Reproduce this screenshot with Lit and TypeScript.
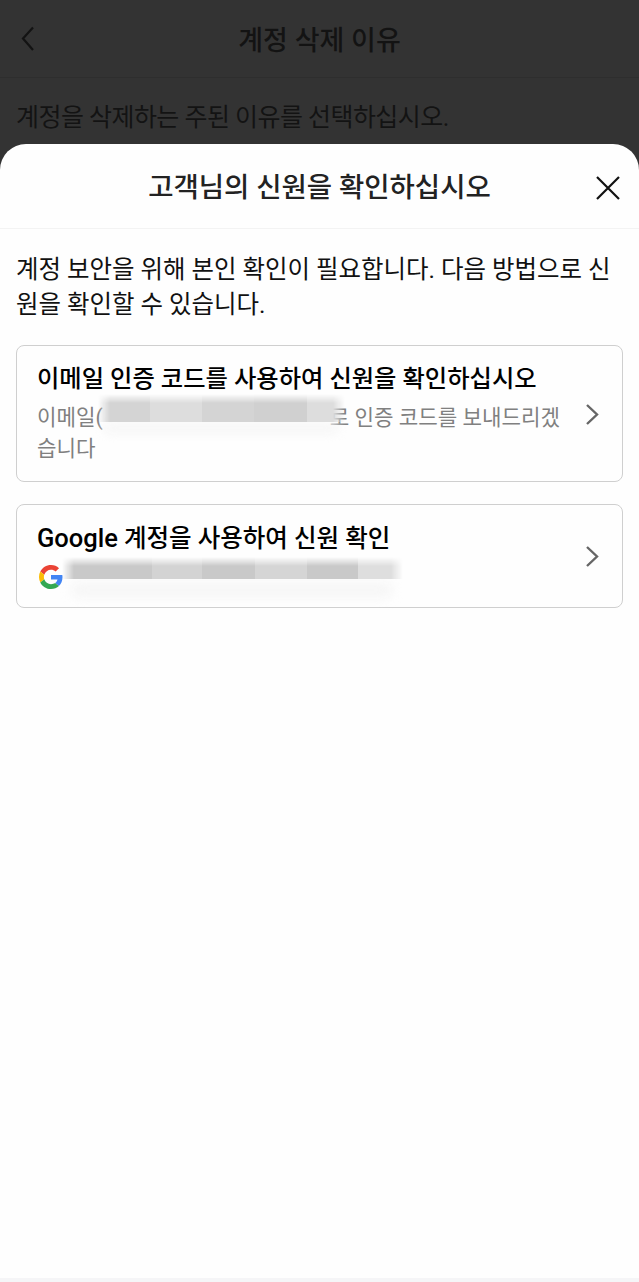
import { LitElement, html, css, svg } from "lit";
import { customElement } from "lit/decorators.js";

const chevron = svg`<path d="M3 2 L13 11.5 L3 21" fill="none" stroke="#666" stroke-width="2.4"/>`;

@customElement("app-root")
export class AppRoot extends LitElement {
  static styles = css`
    :host {
      display: block;
      position: relative;
      width: 639px;
      height: 1282px;
      overflow: hidden;
      background: #333;
      font-family: Roboto, "Noto Sans CJK KR", sans-serif;
      color: #000;
    }
    .under { color: #131313; }
    .top {
      height: 78px;
      display: flex;
      align-items: center;
      justify-content: center;
      position: relative;
      border-bottom: 1px solid #2e2e2e;
      box-sizing: border-box;
      font-size: 27px;
      font-weight: 500;
    }
    .back { position: absolute; left: 19px; top: 26px; }
    .prompt {
      margin: 0;
      padding: 22px 16px 0;
      font-size: 25px;
      line-height: 36px;
      letter-spacing: -0.55px;
    }
    .sheet {
      position: absolute;
      left: 0; right: 0; top: 144px; bottom: 0;
      background: #fefefe;
      border-radius: 26px 26px 0 0;
      display: flex;
      flex-direction: column;
    }
    .sheet-head {
      height: 85px;
      flex: none;
      box-sizing: border-box;
      border-bottom: 1px solid #f3f3f3;
      padding-bottom: 2px;
      display: flex;
      align-items: center;
      justify-content: center;
      position: relative;
      font-size: 27.5px;
      font-weight: 500;
      color: #222;
    }
    .close { position: absolute; left: 596px; top: 32px; }
    .intro {
      margin: 0;
      padding: 23px 16px 0;
      font-size: 24.45px;
      line-height: 35px;
      color: #111;
    }
    .card {
      margin: 0 16px;
      border: 1px solid #cfcfcf;
      border-radius: 8px;
      padding: 14px 56px 0 20px;
      position: relative;
      box-sizing: border-box;
    }
    .c1 { margin-top: 23px; height: 137px; }
    .c2 { margin-top: 22px; height: 104px; }
    .card h3 {
      margin: 0;
      font-size: 24.3px;
      line-height: 38px;
      font-weight: 500;
    }
    .c2 h3 { font-size: 24.5px; }
    .c2 h3 span { font-size: 25.5px; }
    .desc {
      margin: 4px 0 0;
      font-size: 21.2px;
      line-height: 31px;
      color: #808080;
    }
    .gap { display: inline-block; width: 227px; }
    .chev { position: absolute; right: 22px; top: 57px; }
    .c2 .chev { top: 40px; }
    .sub { display: flex; align-items: center; padding: 7px 0 0 2px; position: relative; }
    .halo { position: absolute; filter: blur(5px); border-radius: 12px; }
    .stripes {
      position: absolute;
      display: grid;
      -webkit-mask-image: linear-gradient(to right, transparent, #000 12px, #000 calc(100% - 12px), transparent), linear-gradient(to bottom, transparent, #000 9px);
      -webkit-mask-composite: source-in;
      mask-image: linear-gradient(to right, transparent, #000 12px, #000 calc(100% - 12px), transparent), linear-gradient(to bottom, transparent, #000 9px);
      mask-composite: intersect;
    }
    .s1 {
      left: 81px; top: 48px; width: 247px; height: 28px;
      grid-template-columns: 52px 52px 52px 53px 38px;
    }
    .s1 i:nth-child(1) { background: #d4d4d4; }
    .s1 i:nth-child(2) { background: #dddddd; }
    .s1 i:nth-child(3) { background: #d4d4d4; }
    .s1 i:nth-child(4) { background: #d0d0d0; }
    .s1 i:nth-child(5) { background: #dddddd; }
    .h1 { left: 86px; top: 76px; width: 236px; height: 12px; background: #f7f7f7; }
    .s2 {
      left: 45px; top: 52px; width: 341px; height: 22px;
      grid-template-columns: 90px 50px 53px 52px 51px 45px;
    }
    .s2 i:nth-child(odd) { background: #c9c9c9; }
    .s2 i:nth-child(2) { background: #d3d3d3; }
    .s2 i:nth-child(4) { background: #d5d5d5; }
    .s2 i:nth-child(6) { background: #dedede; }
    .h2 { left: 54px; top: 76px; width: 322px; height: 18px; background: #f7f7f7; }
    .band {
      position: absolute;
      left: 0; right: 0; bottom: 0;
      height: 4px;
      background: #f5f5f7;
    }
  `;

  render() {
    return html`
      <div class="under">
        <div class="top">
          <svg class="back" width="18" height="26" viewBox="0 0 18 26"><path d="M14 1.5 L4 12.5 L14 24" fill="none" stroke="#131313" stroke-width="2.2"/></svg>
          계정 삭제 이유
        </div>
        <p class="prompt">계정을 삭제하는 주된 이유를 선택하십시오.</p>
      </div>
      <div class="sheet">
        <div class="sheet-head">
          고객님의 신원을 확인하십시오
          <svg class="close" width="24" height="24" viewBox="0 0 24 24"><path d="M1 1 L23 23 M23 1 L1 23" fill="none" stroke="#111" stroke-width="2.2"/></svg>
        </div>
        <p class="intro">계정 보안을 위해 본인 확인이 필요합니다. 다음 방법으로 신원을 확인할 수 있습니다.</p>
        <div class="card c1">
          <h3>이메일 인증 코드를 사용하여 신원을 확인하십시오</h3>
          <p class="desc">이메일(<span class="gap"></span>로 인증 코드를 보내드리겠<br />습니다</p>
          <div class="halo h1"></div>
          <div class="stripes s1"><i></i><i></i><i></i><i></i><i></i></div>
          <svg class="chev" width="16" height="23" viewBox="0 0 16 23">${chevron}</svg>
        </div>
        <div class="card c2">
          <h3><span>Google</span> 계정을 사용하여 신원 확인</h3>
          <div class="halo h2"></div>
          <div class="stripes s2"><i></i><i></i><i></i><i></i><i></i><i></i></div>
          <div class="sub">
            <svg width="24" height="24" viewBox="0 0 48 48">
              <path fill="#EA4335" d="M24 9.5c3.54 0 6.71 1.22 9.21 3.6l6.85-6.85C35.9 2.38 30.47 0 24 0 14.62 0 6.51 5.38 2.56 13.22l7.98 6.19C12.43 13.72 17.74 9.5 24 9.5z"/>
              <path fill="#4285F4" d="M46.98 24.55c0-1.57-.15-3.09-.38-4.55H24v9.02h12.94c-.58 2.96-2.26 5.48-4.78 7.18l7.73 6c4.51-4.18 7.09-10.36 7.09-17.65z"/>
              <path fill="#FBBC05" d="M10.53 28.59c-.48-1.45-.76-2.99-.76-4.59s.27-3.14.76-4.59l-7.98-6.19C.92 16.46 0 20.12 0 24c0 3.88.92 7.54 2.56 10.78l7.97-6.19z"/>
              <path fill="#34A853" d="M24 48c6.48 0 11.93-2.13 15.89-5.81l-7.73-6c-2.15 1.45-4.92 2.3-8.16 2.3-6.26 0-11.57-4.22-13.47-9.91l-7.98 6.19C6.51 42.62 14.62 48 24 48z"/>
            </svg>
          </div>
          <svg class="chev" width="16" height="23" viewBox="0 0 16 23">${chevron}</svg>
        </div>
        <div class="band"></div>
      </div>
    `;
  }
}
